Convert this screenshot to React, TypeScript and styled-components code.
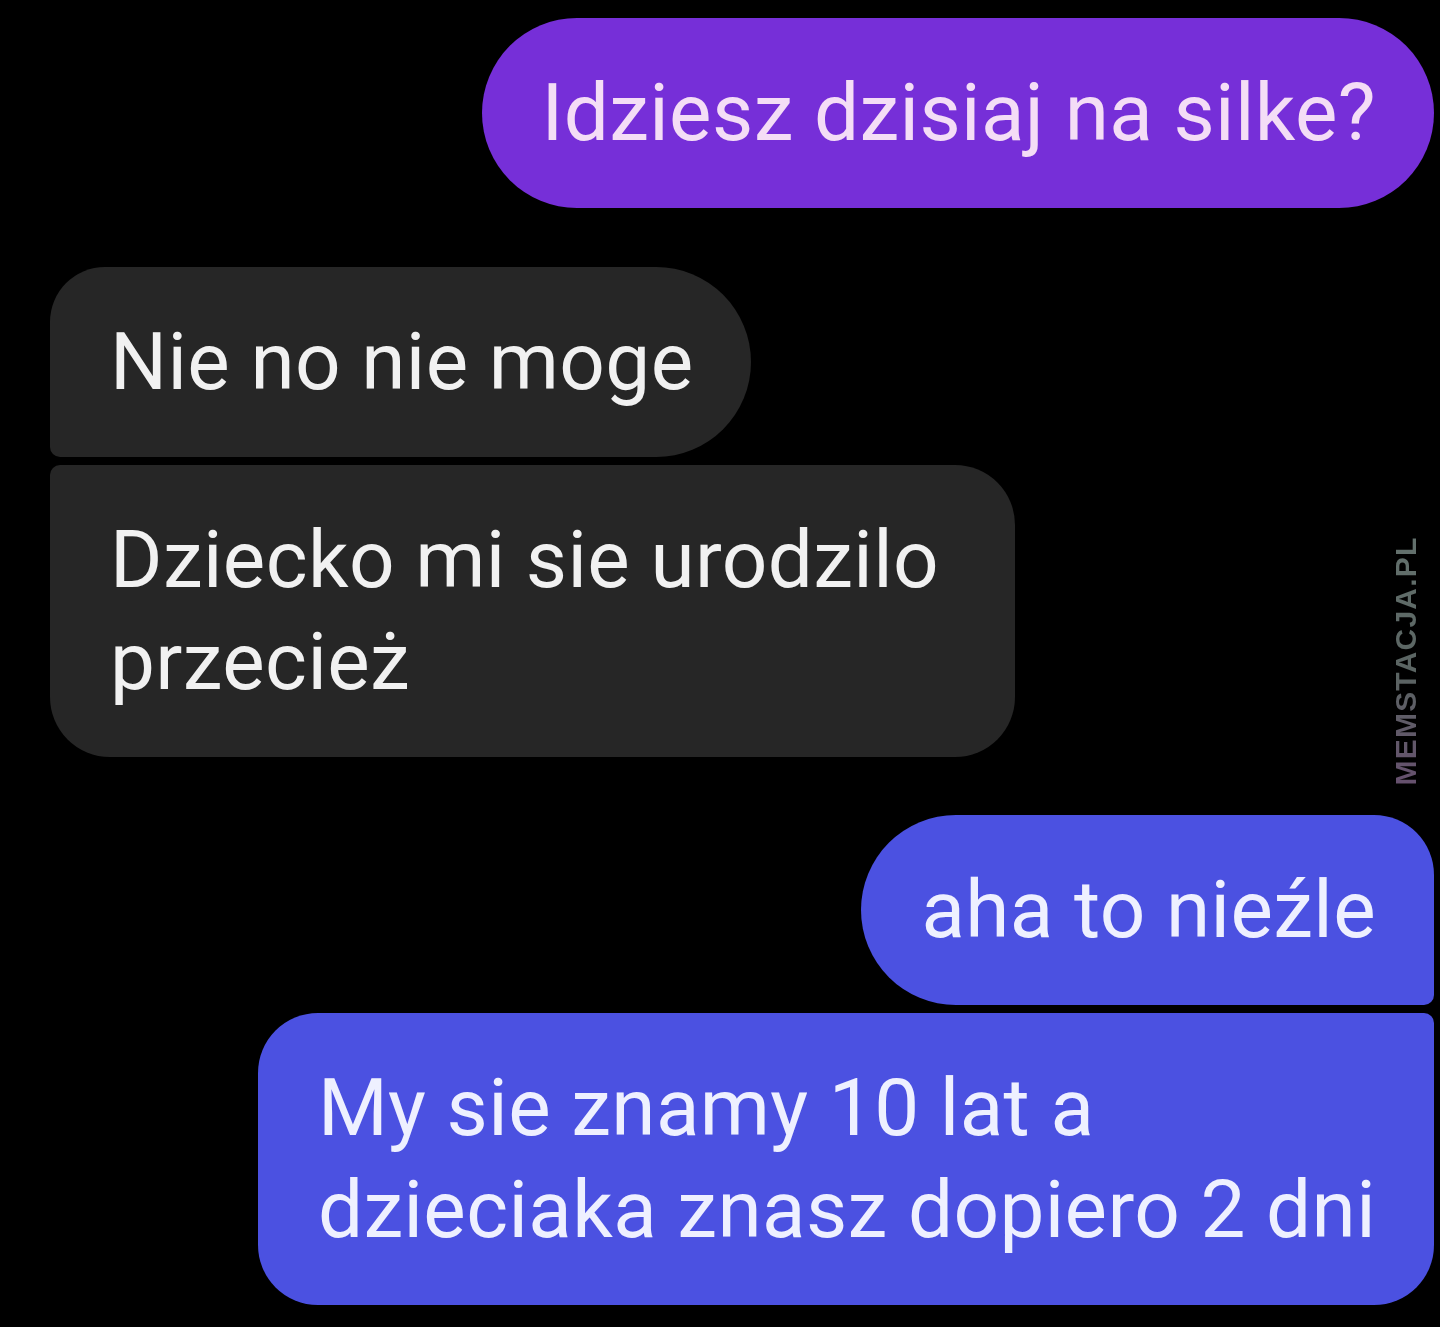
import React from "react";
import styled, { createGlobalStyle, css } from "styled-components";

const Global = createGlobalStyle`
  html, body { margin: 0; padding: 0; background: #000; }
  body { font-family: Roboto, "Noto Sans", "Liberation Sans", sans-serif; }
`;

const Page = styled.div`
  position: relative;
  width: 1440px;
  height: 1327px;
  background: #000;
  box-sizing: border-box;
  padding: 18px 6px 0 50px;
  display: flex;
  flex-direction: column;
  overflow: hidden;
`;

const Group = styled.div<{ $mine?: boolean; $gapTop: number }>`
  display: flex;
  flex-direction: column;
  align-items: ${(p) => (p.$mine ? "flex-end" : "flex-start")};
  gap: 8px;
  margin-top: ${(p) => p.$gapTop}px;
`;

type Shape = "single" | "first" | "last";

const Bubble = styled.div<{ $kind: "purple" | "gray" | "blue"; $shape: Shape; $mine?: boolean }>`
  box-sizing: border-box;
  padding: 44px 58px 44px 60px;
  font-size: 80px;
  line-height: 102px;
  font-weight: 400;
  letter-spacing: 0.4px;
  white-space: pre-line;
  ${(p) =>
    p.$kind === "purple"
      ? css`
          background: #762fd8;
          color: #f4ddf6;
        `
      : p.$kind === "gray"
      ? css`
          background: #262626;
          color: #f1f1f1;
        `
      : css`
          background: #4b51e1;
          color: #eef0ff;
        `}
  ${(p) => {
    if (p.$shape === "single") return css`border-radius: 95px;`;
    if (!p.$mine) {
      return p.$shape === "first"
        ? css`border-radius: 55px 95px 95px 10px;`
        : css`border-radius: 10px 60px 60px 60px; padding-right: 76px;`;
    }
    return p.$shape === "first"
      ? css`border-radius: 95px 60px 10px 95px;`
      : css`border-radius: 60px 10px 60px 60px;`;
  }}
`;

const Watermark = styled.div`
  position: absolute;
  left: 1406px;
  top: 661px;
  transform: translate(-50%, -50%) rotate(-90deg);
  font-family: "Liberation Sans", Arial, sans-serif;
  font-weight: 700;
  font-size: 30px;
  letter-spacing: 1.2px;
  white-space: nowrap;
  background: linear-gradient(90deg, #66506e 0%, #5a6462 45%, #63716d 100%);
  -webkit-background-clip: text;
  background-clip: text;
  color: transparent;
`;

export default function App() {
  return (
    <>
      <Global />
      <Page>
        <Group $mine $gapTop={0}>
          <Bubble $kind="purple" $shape="single" $mine>
            Idziesz dzisiaj na silke?
          </Bubble>
        </Group>
        <Group $gapTop={59}>
          <Bubble $kind="gray" $shape="first">
            Nie no nie moge
          </Bubble>
          <Bubble $kind="gray" $shape="last">
            {"Dziecko mi sie urodzilo\nprzecież"}
          </Bubble>
        </Group>
        <Group $mine $gapTop={58}>
          <Bubble $kind="blue" $shape="first" $mine>
            aha to nieźle
          </Bubble>
          <Bubble $kind="blue" $shape="last" $mine>
            {"My sie znamy 10 lat a\ndzieciaka znasz dopiero 2 dni"}
          </Bubble>
        </Group>
        <Watermark>MEMSTACJA.PL</Watermark>
      </Page>
    </>
  );
}
